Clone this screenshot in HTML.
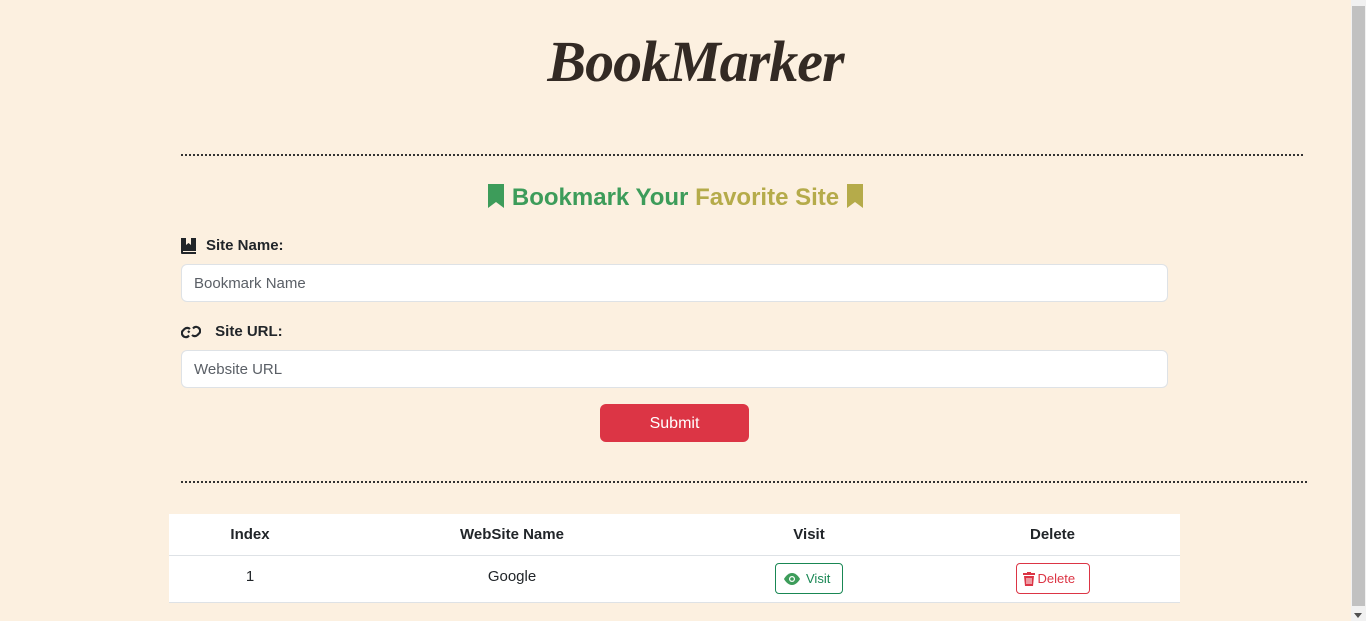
<!DOCTYPE html>
<html><head><meta charset="utf-8"><style>
*{box-sizing:border-box;margin:0;padding:0}
html,body{width:1366px;height:621px;overflow:hidden;background:#fcf0e0;font-family:"Liberation Sans",sans-serif;color:#212529}
.sb{position:absolute;right:0;top:0;width:15px;height:621px;background:#f1f1f1}
.sb .th{position:absolute;left:1px;top:6px;width:13px;height:600px;background:#c1c1c1}
h1{position:absolute;top:28px;left:20px;width:1351px;text-align:center;font-family:"Liberation Serif",serif;font-style:italic;font-weight:bold;font-size:58px;color:#332a24;letter-spacing:-1px}
.hr{position:absolute;border-top:2px dotted #333;height:0}
h2{position:absolute;top:184px;left:0;width:1351px;text-align:center;font-size:24px;font-weight:bold}
.g{color:#3d9c5a}.y{color:#b5ab4a}
.lbl{position:absolute;left:181px;font-size:15px;font-weight:bold;display:flex;align-items:center;gap:10px}
.in{position:absolute;left:181px;width:987px;height:38px;background:#fff;border:1px solid #dee2e6;border-radius:6px;padding-left:12px;font-size:15px;line-height:38px;color:#5a5f66}
.btn{position:absolute;left:600px;top:404px;width:149px;height:38px;background:#dc3545;border-radius:6px;color:#fff;font-size:16px;text-align:center;line-height:39px}
table{position:absolute;left:169px;top:514px;width:1011px;border-collapse:collapse;background:#fff;font-size:15px}
td,th{text-align:center;border-bottom:1px solid #dee2e6}
th{height:41px}
td{height:47px}
.bv,.bd{display:inline-flex;align-items:center;gap:6px;height:31px;padding:0 8px;border-radius:4px;font-size:13px}
.bv{border:1px solid #198754;color:#198754;width:68px}
.bd{border:1px solid #dc3545;color:#dc3545;width:74px;gap:3px;padding:0 6px}
</style></head><body>
<h1>BookMarker</h1>
<div class="hr" style="left:181px;width:1122px;top:154px"></div>
<h2><svg width="18" height="24" viewBox="0 0 18 24" style="vertical-align:-3px"><path d="M1 0h16v24l-8-6-8 6z" fill="#3d9c5a"/></svg> <span class="g">Bookmark Your</span> <span class="y">Favorite Site</span> <svg width="18" height="24" viewBox="0 0 18 24" style="vertical-align:-3px"><path d="M1 0h16v24l-8-6-8 6z" fill="#b5ab4a"/></svg></h2>
<div class="lbl" style="top:237px"><svg width="15" height="16" viewBox="0 0 15 16"><path d="M0 0h15v13H2v1h13v2H1a1 1 0 01-1-1z" fill="#212529"/><path d="M5 0h5v7l-2.5-2L5 7z" fill="#fcf0e0"/></svg><span>Site Name:</span></div>
<div class="in" style="top:264px">Bookmark Name</div>
<div class="lbl" style="top:323px"><svg width="20" height="14" viewBox="0 0 20 14"><g fill="none" stroke="#212529" stroke-width="2.2"><path d="M9 4a4 4 0 00-5.5 0l-2 2a4 4 0 005.5 5.5l1-1"/><path d="M11 10a4 4 0 005.5 0l2-2A4 4 0 0013 2.5l-1 1"/><path d="M7 7.5l1.5-1.5"/></g></svg><span>&nbsp;Site URL:</span></div>
<div class="in" style="top:350px">Website URL</div>
<div class="btn">Submit</div>
<div class="hr" style="left:181px;width:1126px;top:481px"></div>
<table>
<tr><th style="width:162px">Index</th><th style="width:362px">WebSite Name</th><th style="width:232px">Visit</th><th>Delete</th></tr>
<tr><td style="vertical-align:top;padding-top:12px">1</td><td style="vertical-align:top;padding-top:12px">Google</td><td><span class="bv"><svg width="16" height="12" viewBox="0 0 16 12"><path d="M8 0C4 0 1 4 0 6c1 2 4 6 8 6s7-4 8-6c-1-2-4-6-8-6z" fill="#3d9c5a"/><circle cx="8" cy="6" r="3" fill="#fff"/><circle cx="8" cy="6" r="1.8" fill="#3d9c5a"/></svg> Visit</span></td><td><span class="bd"><svg width="12" height="14" viewBox="0 0 12 14"><path d="M0 1h4V0h4v1h4v2H0z" fill="#dc3545"/><path d="M1 4h10l-1 10H2z" fill="#dc3545"/><path d="M4 6v6M6 6v6M8 6v6" stroke="#fff" stroke-width="1"/></svg> Delete</span></td></tr>
</table>
<div class="sb"><div class="th"></div><div style="position:absolute;left:3px;bottom:3px;border:4px solid transparent;border-top:5px solid #505050;border-bottom:none"></div></div>
</body></html>
